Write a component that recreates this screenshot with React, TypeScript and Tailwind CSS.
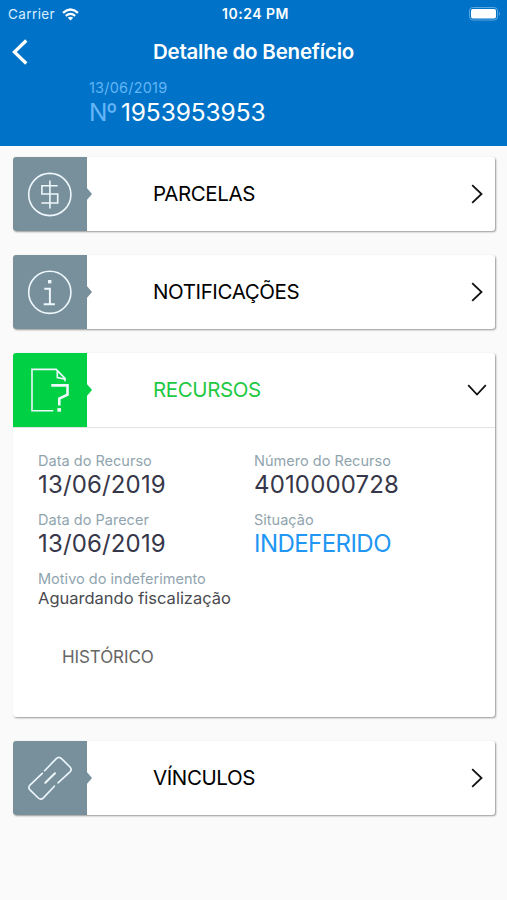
import type { ReactNode } from 'react'
import clsx from 'clsx'

interface PanelHeaderProps {
  title: string
  icon: ReactNode
  open?: boolean
}

interface FieldProps {
  label: string
  value: string
  valueClass?: string
}

const iconProps = {
  viewBox: '0 0 74 74',
  fill: 'none',
  stroke: '#eef7fc',
  strokeWidth: 1.6,
  className: 'w-[74px] h-[74px] shrink-0',
}

function MoneyIcon() {
  return (
    <svg {...iconProps}>
      <circle cx="36.8" cy="37.5" r="21.1" />
      <path d="M44.7 28.7H28.9V37H44.7V46H28.4M36.9 23.5V51.5" />
    </svg>
  )
}

function InfoIcon() {
  return (
    <svg {...iconProps}>
      <circle cx="36.8" cy="37.3" r="21.1" />
      <path d="M31.3 33.8H36.9V49M30.7 49.2H41.9" strokeWidth="2" />
      <rect x="35" y="25" width="3.4" height="3.4" fill="#eef7fc" stroke="none" />
    </svg>
  )
}

function AppealIcon() {
  return (
    <svg {...iconProps}>
      <path d="M40.3 57.7H19V16.4H43.2L52 25.4V28.2M44.3 17.5V24.6L51.5 26" />
      <path d="M38.3 32.4H54.5V41.6L46.3 45.6V52.6" strokeWidth="2.6" />
      <rect x="44.4" y="55.1" width="3.6" height="3.6" fill="#eef7fc" stroke="none" />
    </svg>
  )
}

function LinkIcon() {
  return (
    <svg {...iconProps} strokeLinecap="round">
      <path d="M31.6 29.7L43.3 17.6Q45.9 15 48.5 17.6L57 26Q59.4 28.4 57 30.9L45 41.8" />
      <path d="M29.3 32.3L17.2 43.8Q14.6 46.4 17 48.9L25.3 57Q27.8 59.4 30.4 56.9L41.4 45.2" />
      <path d="M32.3 41.7L42 32.3" strokeWidth="2" />
    </svg>
  )
}

function StatusBar() {
  return (
    <div className="grid grid-cols-[1fr_auto_1fr] items-center h-7 pl-2 pr-1.5 text-[13.5px] text-white">
      <div className="flex items-center gap-[7px] tracking-[0.4px] text-[#d9eeff]">
        <span>Carrier</span>
        <svg viewBox="0 0 17 13" className="w-[17px] h-[13px]" fill="none" stroke="#fff" strokeWidth="2.2">
          <path d="M1 4.8Q8.5 -1.8 16 4.8M3.8 7.8Q8.5 3.8 13.2 7.8" />
          <path d="M8.5 12.5L5.8 9.8Q8.5 7.6 11.2 9.8Z" fill="#fff" stroke="none" />
        </svg>
      </div>
      <span className="pl-0.5 text-center text-[14px] leading-4 font-semibold tracking-[0.5px]">10:24 PM</span>
      <svg viewBox="0 0 32 14" className="w-8 h-[14px] justify-self-end">
        <rect x="0.5" y="0.5" width="28" height="12.5" rx="3.2" fill="none" stroke="#5ba7e0" />
        <rect x="2" y="2" width="25" height="9.5" rx="1.8" fill="#fff" />
        <path d="M30 4.8Q31.6 6.8 30 8.8Z" fill="#7dbbea" />
      </svg>
    </div>
  )
}

function PanelHeader({ title, icon, open = false }: PanelHeaderProps) {
  return (
    <div className="flex items-center h-[74px]">
      <div
        className={clsx(
          'relative w-[74px] h-[74px] shrink-0 rounded-tl-[3px]',
          open ? 'bg-[#00d144] text-[#00d144]' : 'bg-[#78909c] text-[#78909c] rounded-bl-[3px]'
        )}
      >
        {icon}
        <svg viewBox="0 0 6 14" className="absolute left-[73px] top-[30px] w-1.5 h-3.5" fill="currentColor">
          <path d="M0 0L6 7L0 14Z" />
        </svg>
      </div>
      <h2
        className={clsx(
          'flex-1 pl-[66px] text-[20.5px] tracking-[-0.4px]',
          open ? 'text-[#1fc943]' : 'text-black'
        )}
      >
        {title}
      </h2>
      <svg
        viewBox="0 0 20 20"
        className={clsx('w-5 h-5 mr-2', open && 'rotate-90')}
        fill="none"
        stroke="#111"
        strokeWidth="1.8"
      >
        <path d="M5.2 1.2L14.5 10L5.2 18.8" />
      </svg>
    </div>
  )
}

const numberClass = 'text-[24px] leading-[30px] tracking-[0.15px] text-[#37374a]'

function Field({ label, value, valueClass = numberClass }: FieldProps) {
  return (
    <div>
      <p className="text-[14.5px] leading-[18px] tracking-[0.02px] text-[#90a4ae]">{label}</p>
      <p className={valueClass}>{value}</p>
    </div>
  )
}

const cardClass = 'rounded-[3px] bg-white shadow-[1px_1px_2px_rgba(0,0,0,0.4)]'

export default function App() {
  return (
    <div className="w-[507px] h-[900px] overflow-hidden bg-[#fafafa] font-['Inter',sans-serif]">
      {/* Header */}
      <header className="h-[146px] bg-[#0073c8]">
        <StatusBar />
        <div className="grid grid-cols-[1fr_auto_1fr] items-center h-12 px-3">
          <svg viewBox="0 0 16 26" className="w-4 h-[26px]" fill="none" stroke="#fff" strokeWidth="3.2">
            <path d="M14.3 1.5L2.4 13L14.3 24.5" />
          </svg>
          <h1 className="text-[20.5px] font-semibold tracking-[-0.2px] text-white">Detalhe do Benefício</h1>
        </div>
        <div className="pl-[89px] pt-[3px]">
          <p className="text-[14.5px] leading-[18px] tracking-[0.2px] text-[#64b5f6]">13/06/2019</p>
          <p className="flex gap-[5px] text-[24.5px] leading-[30px] text-white">
            <span className="tracking-[-1.3px] text-[#64b5f6]">Nº</span>
            <span className="tracking-[-0.1px]">1953953953</span>
          </p>
        </div>
      </header>

      <main className="flex flex-col gap-6 pt-[11px] pl-[13px] pr-3">
        <section className={cardClass}>
          <PanelHeader title="PARCELAS" icon={<MoneyIcon />} />
        </section>

        <section className={cardClass}>
          <PanelHeader title="NOTIFICAÇÕES" icon={<InfoIcon />} />
        </section>

        <section className={clsx(cardClass, 'h-[364px]')}>
          <PanelHeader title="RECURSOS" icon={<AppealIcon />} open />
          <div className="border-t border-[#e2e2e2] pl-[25px] pt-6">
            <div className="grid grid-cols-[216px_1fr] gap-y-[11px]">
              <Field label="Data do Recurso" value="13/06/2019" />
              <Field label="Número do Recurso" value="4010000728" />
              <Field label="Data do Parecer" value="13/06/2019" />
              <Field
                label="Situação"
                value="INDEFERIDO"
                valueClass="text-[24px] leading-[30px] tracking-[-0.55px] text-[#2196f3]"
              />
              <Field
                label="Motivo do indeferimento"
                value="Aguardando fiscalização"
                valueClass="text-[16.5px] leading-5 text-[#4a4a4f]"
              />
            </div>
            <button className="mt-[37px] ml-6 text-[17px] leading-6 tracking-[-0.1px] text-[#666]">HISTÓRICO</button>
          </div>
        </section>

        <section className={cardClass}>
          <PanelHeader title="VÍNCULOS" icon={<LinkIcon />} />
        </section>
      </main>
    </div>
  )
}
